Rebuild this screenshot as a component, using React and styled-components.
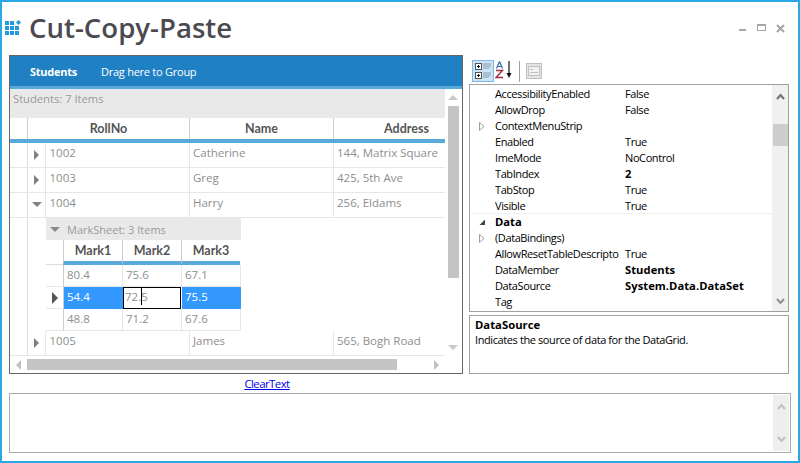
import React from 'react'
import styled, { createGlobalStyle } from 'styled-components'

const GlobalStyle = createGlobalStyle`
  html, body { margin: 0; padding: 0; background: #fff; }
  * { box-sizing: border-box; }
`

const Window = styled.div`
  width: 800px;
  height: 463px;
  border: 2px solid #29a9e6;
  background: #fff;
  padding: 0 7px;
  font-family: "Open Sans", sans-serif;
  overflow: hidden;
`

const TitleBar = styled.div`
  height: 53px;
  display: flex;
  align-items: center;
  margin-left: -4px;
  padding: 0 6px 1px 0;
`

const Title = styled.h1`
  margin: -2px 0 0 8px;
  font-size: 27.6px;
  font-weight: 600;
  color: #4a4a50;
  flex: 1;
`

const WindowButtons = styled.div`
  display: flex;
  align-items: center;
  gap: 10px;
`

const Main = styled.div`
  display: flex;
  gap: 6px;
  height: 319px;
`

const GridPanel = styled.div`
  width: 454px;
  border: 1px solid #666;
  display: flex;
  flex-direction: column;
`

const GroupBar = styled.div`
  height: 33px;
  background: #2080c4;
  border-bottom: 3px solid #5aa9dc;
  display: flex;
  align-items: center;
  color: #fff;
  font-size: 11px;
  letter-spacing: -0.25px;
  padding-left: 20px;
  gap: 24px;
`

const GroupTab = styled.span`
  font-weight: ${p => (p.$active ? 700 : 400)};
`

const GridView = styled.div`
  flex: 1;
  display: grid;
  grid-template-columns: 435px 17px;
  grid-template-rows: 1fr 17px;
  min-height: 0;
`

const Rows = styled.div`
  overflow: hidden;
`

const Summary = styled.div`
  height: 29px;
  background: #e9e9e9;
  color: #999;
  font-size: 11.2px;
  padding: 2px 3px;
`

const HeaderRow = styled.div`
  height: 25px;
  display: grid;
  grid-template-columns: 17px 162px 144px 112px;
  border-bottom: 4px solid #5aa9dc;
  color: #555;
  font-family: Lato, sans-serif;
  font-size: 12.5px;
  font-weight: 700;
  line-height: 21px;
`

const HeaderCell = styled.div`
  border-left: ${p => (p.$first ? 'none' : '1px solid #ccc')};
  text-align: ${p => p.$align || 'center'};
  padding-left: ${p => p.$pad || 0}px;
  white-space: nowrap;
  overflow: hidden;
`

const DataRow = styled.div`
  height: 25px;
  display: grid;
  grid-template-columns: 18px 18px 144px 144px 111px;
  border-bottom: 1px solid #e6e6e6;
  color: #8e8e8e;
  font-size: 11.5px;
  line-height: 19px;
`

const Gutter = styled.div`
  border-right: 1px solid #dcdcdc;
`

const Expander = styled.div`
  border-right: 1px solid #e6e6e6;
  display: flex;
  align-items: center;
  justify-content: center;
  padding-bottom: 1px;
`

const Cell = styled.div`
  border-right: ${p => (p.$last ? 'none' : '1px solid #e6e6e6')};
  padding-left: ${p => p.$pad || 3}px;
  white-space: nowrap;
  overflow: hidden;
`

const Tri = styled.span`
  display: block;
  width: 0;
  height: 0;
  ${p => {
    const s = p.$size || 5
    const c = p.$color || '#808080'
    const t = 'transparent'
    if (p.$dir === 'right') return `border-top: ${s}px solid ${t}; border-bottom: ${s}px solid ${t}; border-left: ${s}px solid ${c};`
    if (p.$dir === 'left') return `border-top: ${s}px solid ${t}; border-bottom: ${s}px solid ${t}; border-right: ${s}px solid ${c};`
    if (p.$dir === 'up') return `border-left: ${s}px solid ${t}; border-right: ${s}px solid ${t}; border-bottom: ${s}px solid ${c};`
    return `border-left: ${s}px solid ${t}; border-right: ${s}px solid ${t}; border-top: ${s}px solid ${c};`
  }}
`

const ChildArea = styled.div`
  height: 113px;
  display: grid;
  grid-template-columns: 18px 18px 195px;
`

const ChildGrid = styled.div`
  display: flex;
  flex-direction: column;
`

const ChildBar = styled.div`
  height: 22px;
  background: #e9e9e9;
  color: #999;
  font-size: 11px;
  display: flex;
  align-items: center;
  gap: 7px;
  padding-left: 4px;
`

const ChildHeader = styled.div`
  height: 25px;
  display: grid;
  grid-template-columns: 17px 59px 59px 59px;
  color: #555;
  font-family: Lato, sans-serif;
  font-size: 12.5px;
  font-weight: 700;
  line-height: 21px;
`

const ChildHeaderBlank = styled.div`
  border-bottom: 1px solid #ddd;
`

const ChildHeaderCell = styled.div`
  border-left: 1px solid #ccc;
  border-bottom: 4px solid #5aa9dc;
  text-align: center;
`

const ChildRow = styled.div`
  height: 22px;
  display: grid;
  grid-template-columns: 18px 59px 59px 59px;
  color: ${p => (p.$selected ? '#fff' : '#8e8e8e')};
  font-size: 11.5px;
  line-height: 19px;
`

const Indicator = styled.div`
  border-right: 1px solid #ccc;
  border-bottom: 1px solid #e6e6e6;
  display: flex;
  align-items: center;
  justify-content: center;
`

const ChildCell = styled.div`
  background: ${p => (p.$selected ? '#3399ff' : '#fff')};
  border-right: 1px solid ${p => (p.$selected ? '#3399ff' : '#e6e6e6')};
  border-bottom: 1px solid ${p => (p.$selected ? '#3399ff' : '#e6e6e6')};
  padding-left: 3px;
`

const EditCell = styled.div`
  background: #fff;
  border: 1px solid #000;
  color: #8e8e8e;
  padding-left: 1px;
  line-height: 17px;
  margin-right: 1px;
`

const Caret = styled.span`
  display: inline-block;
  width: 1px;
  height: 17px;
  background: #000;
  vertical-align: top;
  margin: 0 -1px 0 0;
`

const VScroll = styled.div`
  padding: 6px 3px 6px 2px;
  display: flex;
  flex-direction: column;
  align-items: center;
`

const VThumb = styled.div`
  width: 11px;
  height: 172px;
  background: #c4c4c4;
  margin-top: 6px;
`

const Spring = styled.div`
  flex: 1;
`

const HScroll = styled.div`
  display: flex;
  align-items: center;
  padding: 0 6px;
`

const HThumb = styled.div`
  width: 370px;
  height: 11px;
  background: #c4c4c4;
  margin-left: 6px;
`

const PropsPanel = styled.div`
  width: 320px;
  display: flex;
  flex-direction: column;
`

const Toolbar = styled.div`
  height: 29px;
  display: flex;
  align-items: center;
  padding: 3px 3px 0;
`

const ToolButton = styled.div`
  width: 22px;
  height: 22px;
  margin-right: 1px;
  display: flex;
  align-items: center;
  justify-content: center;
  background: #c9e4f8;
  border: 1px solid #7fb8e6;
`

const ToolSep = styled.div`
  width: 1px;
  height: 21px;
  background: #a0a0a0;
  margin: 0 6px 0 7px;
`

const PropsBox = styled.div`
  height: 228px;
  border: 1px solid #a0a0a0;
  display: grid;
  grid-template-columns: 1fr 16px;
`

const PropList = styled.div`
  padding-top: 1px;
  color: #000;
  font-size: 11px;
  overflow: hidden;
`

const PropRow = styled.div`
  height: 16px;
  display: grid;
  grid-template-columns: 25px 125px 1fr;
  line-height: 16px;
  white-space: nowrap;
  letter-spacing: -0.4px;
`

const CategoryRow = styled(PropRow)`
  height: 17px;
  margin-top: -1px;
  border-top: 1px solid #f0f0f0;
  font-weight: 700;
  font-size: 11.2px;
  letter-spacing: 0;
`

const PropMark = styled.span`
  display: flex;
  align-items: center;
  justify-content: center;
  padding-right: 1px;
`

const PropName = styled.span`
  overflow: hidden;
`

const PropValue = styled.span`
  margin-left: 5px;
  font-weight: ${p => (p.$bold ? 700 : 400)};
  font-size: ${p => (p.$bold ? '11.2px' : 'inherit')};
  letter-spacing: ${p => (p.$bold ? '0.05px' : 'inherit')};
`

const PropScroll = styled.div`
  background: #f0f0f0;
  display: flex;
  flex-direction: column;
  align-items: center;
  padding: 8px 0 6px;
`

const PropThumb = styled.div`
  width: 15px;
  height: 22px;
  background: #cdcdcd;
  margin-top: 24px;
`

const DescBox = styled.div`
  margin-top: 3px;
  flex: 1;
  border: 1px solid #a0a0a0;
  padding: 1px 5px;
  font-size: 11px;
  line-height: 15px;
  color: #000;
`

const DescTitle = styled.div`
  font-weight: 700;
  font-size: 11.3px;
`

const DescText = styled.div`
  letter-spacing: -0.4px;
`

const LinkRow = styled.div`
  height: 19px;
  width: 516px;
  text-align: center;
  font-size: 11.5px;
  line-height: 20px;
  letter-spacing: -0.6px;
`

const ClearLink = styled.a`
  color: #0000ee;
  text-decoration: underline;
`

const TextBox = styled.div`
  height: 60px;
  width: 782px;
  border: 1px solid #aaa;
  display: flex;
  justify-content: flex-end;
  padding: 1px;
`

const TextScroll = styled.div`
  width: 16px;
  background: #eee;
  display: flex;
  flex-direction: column;
  justify-content: space-between;
  align-items: center;
  padding: 8px 0;
`

const Chevron = ({ up, color = '#c0c0c0' }) => (
  <svg width="9" height="7" viewBox="0 0 9 7">
    <path d={up ? 'M1 6 L4.5 2 L8 6' : 'M1 1 L4.5 5 L8 1'} fill="none" stroke={color} strokeWidth="2" />
  </svg>
)

const AppIcon = () => (
  <svg width="16" height="16" viewBox="0 0 16 16" fill="#1f9bde">
    {[1, 6, 11].flatMap(y => [0, 5, 10].map(x => (
      x === 10 && y === 1 ? null : <rect key={`${x}-${y}`} x={x} y={y} width="4" height="4" />
    )))}
    <path d="M13.5 0 L16 2.5 L13.5 5 L11 2.5 Z" />
  </svg>
)

const Minimize = () => (
  <svg width="8" height="8" viewBox="0 0 8 8"><rect x="0" y="5" width="7" height="2" fill="#a6a6a6" /></svg>
)
const Maximize = () => (
  <svg width="9" height="8" viewBox="0 0 9 8"><rect x="0.5" y="0.5" width="8" height="6" fill="none" stroke="#a6a6a6" /><rect x="0" y="0" width="9" height="2" fill="#a6a6a6" /></svg>
)
const Close = () => (
  <svg width="9" height="9" viewBox="0 0 9 9"><path d="M1 1 L8 8 M8 1 L1 8" stroke="#a6a6a6" strokeWidth="2" /></svg>
)

const CategorizedIcon = () => (
  <svg width="18" height="18" viewBox="0 0 18 18">
    {[2, 11].map(y => (
      <g key={y}>
        <rect x="1.5" y={y - 0.5} width="6" height="6" fill="#fff" stroke="#555" />
        <path d={`M3 ${y + 2.5} h3 M4.5 ${y + 1} v3`} stroke="#111" />
        <path d={`M9 ${y} h8 M9 ${y + 2} h8 M9 ${y + 4} h6`} stroke="#8a9aa8" />
      </g>
    ))}
  </svg>
)

const SortIcon = () => (
  <svg width="17" height="20" viewBox="0 0 17 20">
    <path d="M4.5 0.5 L1.5 7.5 M4.5 0.5 L7.5 7.5 M3 5.5 H6" stroke="#3a64b0" strokeWidth="1.2" fill="none" />
    <path d="M1 9.5 H7.5 L1 16.5 H8" stroke="#a03040" strokeWidth="1.4" fill="none" />
    <path d="M14 0 V13" stroke="#111" strokeWidth="1.2" />
    <path d="M11.5 12 H16.5 L14 17 Z" fill="#111" />
  </svg>
)

const PagesIcon = () => (
  <svg width="16" height="16" viewBox="0 0 16 16">
    <rect x="0.5" y="0.5" width="15" height="15" fill="#e4e4e4" stroke="#c0c0c0" />
    <rect x="2.5" y="3.5" width="11" height="9" fill="#f2f2f2" stroke="#c0c0c0" />
    <path d="M4 6.5 h3 M4 9.5 h8" stroke="#bdbdbd" />
  </svg>
)

const students = [
  { id: '1002', name: 'Catherine', address: '144, Matrix Square' },
  { id: '1003', name: 'Greg', address: '425, 5th Ave' },
  { id: '1004', name: 'Harry', address: '256, Eldams', open: true },
]

const marks = [
  ['80.4', '75.6', '67.1'],
  ['54.4', '72.5', '75.5'],
  ['48.8', '71.2', '67.6'],
]

const props1 = [
  ['AccessibilityEnabled', 'False'],
  ['AllowDrop', 'False'],
  ['ContextMenuStrip', '', 'plus'],
  ['Enabled', 'True'],
  ['ImeMode', 'NoControl'],
  ['TabIndex', '2', '', true],
  ['TabStop', 'True'],
  ['Visible', 'True'],
]

const props2 = [
  ['(DataBindings)', '', 'plus'],
  ['AllowResetTableDescripto', 'True'],
  ['DataMember', 'Students', '', true],
  ['DataSource', 'System.Data.DataSet', '', true],
  ['Tag', ''],
]

const PropItem = ({ name, value, mark, bold }) => (
  <PropRow>
    <PropMark>
      {mark === 'plus' && (
        <svg width="6" height="9" viewBox="0 0 6 9"><path d="M0.5 0.5 L5 4.5 L0.5 8.5 Z" fill="#fff" stroke="#a0a0a0" /></svg>
      )}
    </PropMark>
    <PropName>{name}</PropName>
    <PropValue $bold={bold}>{value}</PropValue>
  </PropRow>
)

const StudentRow = ({ s }) => (
  <DataRow>
    <Gutter />
    <Expander>
      <Tri $dir={s.open ? 'down' : 'right'} $size={5} />
    </Expander>
    <Cell $pad={3.5}>{s.id}</Cell>
    <Cell>{s.name}</Cell>
    <Cell $last>{s.address}</Cell>
  </DataRow>
)

const App = () => (
  <Window>
    <GlobalStyle />
    <TitleBar>
      <AppIcon />
      <Title>Cut-Copy-Paste</Title>
      <WindowButtons>
        <Minimize />
        <Maximize />
        <Close />
      </WindowButtons>
    </TitleBar>

    <Main>
      <GridPanel>
        <GroupBar>
          <GroupTab $active>Students</GroupTab>
          <GroupTab>Drag here to Group</GroupTab>
        </GroupBar>
        <GridView>
          <Rows>
            <Summary>Students: 7 Items</Summary>
            <HeaderRow>
              <HeaderCell $first />
              <HeaderCell>RollNo</HeaderCell>
              <HeaderCell>Name</HeaderCell>
              <HeaderCell $align="left" $pad={50}>Address</HeaderCell>
            </HeaderRow>
            {students.map(s => <StudentRow key={s.id} s={s} />)}
            <ChildArea>
              <Gutter />
              <div />
              <ChildGrid>
                <ChildBar>
                  <Tri $dir="down" $size={5} $color="#8a8a8a" />
                  <span>MarkSheet: 3 Items</span>
                </ChildBar>
                <ChildHeader>
                  <ChildHeaderBlank />
                  <ChildHeaderCell>Mark1</ChildHeaderCell>
                  <ChildHeaderCell>Mark2</ChildHeaderCell>
                  <ChildHeaderCell>Mark3</ChildHeaderCell>
                </ChildHeader>
                {marks.map((row, i) => (
                  <ChildRow key={row[0]} $selected={i === 1}>
                    <Indicator>{i === 1 && <Tri $dir="right" $size={6} $color="#555" />}</Indicator>
                    <ChildCell $selected={i === 1}>{row[0]}</ChildCell>
                    {i === 1
                      ? <EditCell>72.<Caret />5</EditCell>
                      : <ChildCell>{row[1]}</ChildCell>}
                    <ChildCell $selected={i === 1}>{row[2]}</ChildCell>
                  </ChildRow>
                ))}
              </ChildGrid>
            </ChildArea>
            <StudentRow s={{ id: '1005', name: 'James', address: '565, Bogh Road' }} />
          </Rows>
          <VScroll>
            <Tri $dir="up" $size={5} $color="#c8c8c8" />
            <VThumb />
            <Spring />
            <Tri $dir="down" $size={5} $color="#c8c8c8" />
          </VScroll>
          <HScroll>
            <Tri $dir="left" $size={5} $color="#c0c0c0" />
            <HThumb />
            <Spring />
            <Tri $dir="right" $size={5} $color="#c0c0c0" />
          </HScroll>
        </GridView>
      </GridPanel>

      <PropsPanel>
        <Toolbar>
          <ToolButton><CategorizedIcon /></ToolButton>
          <SortIcon />
          <ToolSep />
          <PagesIcon />
        </Toolbar>
        <PropsBox>
          <PropList>
            {props1.map(([n, v, m, b]) => <PropItem key={n} name={n} value={v} mark={m} bold={b} />)}
            <CategoryRow>
              <PropMark>
                <svg width="7" height="7" viewBox="0 0 7 7"><path d="M6 0.5 V6 H0.5 Z" fill="#444" /></svg>
              </PropMark>
              <PropName>Data</PropName>
            </CategoryRow>
            {props2.map(([n, v, m, b]) => <PropItem key={n} name={n} value={v} mark={m} bold={b} />)}
          </PropList>
          <PropScroll>
            <Chevron up color="#707070" />
            <PropThumb />
            <Spring />
            <Chevron color="#909090" />
          </PropScroll>
        </PropsBox>
        <DescBox>
          <DescTitle>DataSource</DescTitle>
          <DescText>Indicates the source of data for the DataGrid.</DescText>
        </DescBox>
      </PropsPanel>
    </Main>

    <LinkRow><ClearLink href="#">ClearText</ClearLink></LinkRow>
    <TextBox>
      <TextScroll>
        <Chevron up />
        <Chevron />
      </TextScroll>
    </TextBox>
  </Window>
)

export default App
